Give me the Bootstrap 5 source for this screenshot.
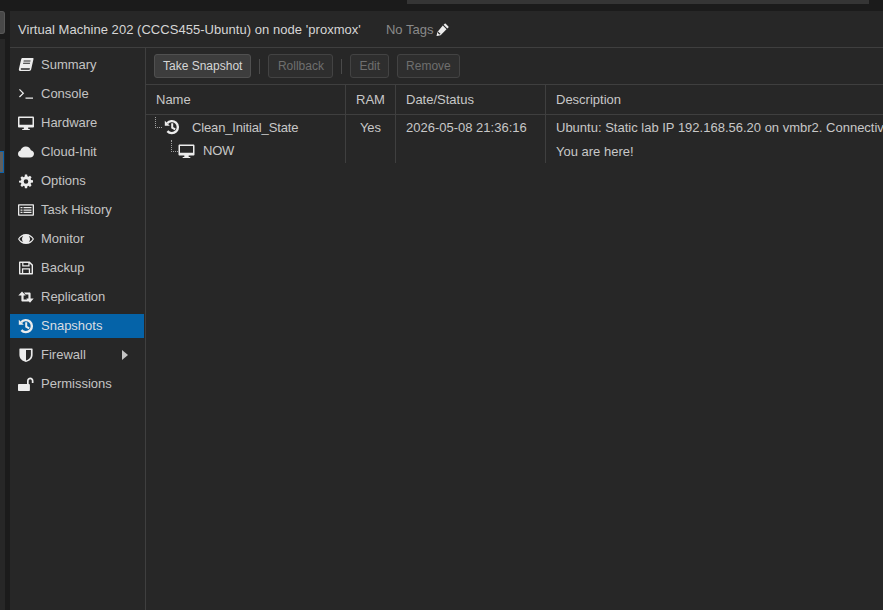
<!DOCTYPE html>
<html lang="en">
<head>
    <meta charset="UTF-8">
    <meta name="viewport" content="width=device-width, initial-scale=1.0">
    <title>Snapshots</title>
    <link href="https://cdn.jsdelivr.net/npm/bootstrap@5.3.0/dist/css/bootstrap.min.css" rel="stylesheet">
    <style>
        html, body {
            height: 100%;
            overflow: hidden;
        }
        body {
            background-color: #1b1b1b;
            color: #d0d0d0;
            font-family: "Liberation Sans", Arial, sans-serif;
            font-size: 13px;
        }
        .app-frame {
            height: 610px;
        }
        .left-rail {
            width: 10px;
            flex: none;
        }
        .rail-top {
            height: 23px;
            margin-top: 11px;
            width: 5px;
            background-color: #484848;
            border: 1px solid #585858;
            border-left: 0;
            border-radius: 0 3px 3px 0;
        }
        .rail-tree {
            margin-top: 5px;
            width: 5px;
            height: 571px;
            background-color: #272727;
            position: relative;
        }
        .rail-sel {
            position: absolute;
            top: 112px;
            left: 0;
            width: 4px;
            height: 22px;
            background-color: #5f5f5f;
            border: 1px solid #0b63ad;
            border-left: 0;
        }
        .main-wrap {
            min-width: 0;
        }
        .top-strip {
            height: 11px;
            flex: none;
        }
        .top-strip-field {
            margin-left: 397px;
            width: 462px;
            height: 4px;
            background-color: #353535;
        }
        .main-panel {
            background-color: #272727;
            min-height: 0;
        }
        .title-bar {
            height: 37px;
            flex: none;
            padding-left: 8px;
            border-bottom: 1px solid #3f3f3f;
            color: #d6d6d6;
            line-height: 38px;
            white-space: nowrap;
            letter-spacing: .04px;
        }
        .tag-label {
            margin-left: 25px;
            color: #8a8a8a;
        }
        .tag-edit {
            fill: #ececec;
            vertical-align: -2px;
            margin-left: -1px;
        }
        .body-area {
            min-height: 0;
        }
        .side-menu {
            width: 136px;
            flex: none;
            border-right: 1px solid #3f3f3f;
            padding-top: 5px;
        }
        .side-item {
            height: 24px;
            margin-bottom: 5px;
            display: flex;
            align-items: center;
            color: #c4c4c4;
            white-space: nowrap;
            position: relative;
        }
        .side-item.is-active {
            background-color: #0563a8;
            color: #d8dde2;
            margin-right: 1px;
        }
        .side-icon {
            width: 16px;
            height: 16px;
            margin-left: 8px;
            margin-right: 7px;
            flex: none;
            fill: #ececec;
            stroke: #ececec;
        }
        .side-arrow {
            position: absolute;
            left: 112px;
            top: 7px;
            width: 0;
            height: 0;
            border-left: 6px solid #c4c4c4;
            border-top: 5px solid transparent;
            border-bottom: 5px solid transparent;
        }
        .content-pane {
            min-width: 0;
        }
        .tool-bar {
            height: 37px;
            flex: none;
            padding-left: 8px;
            border-bottom: 1px solid #3f3f3f;
        }
        .tool-btn {
            height: 24px;
            padding: 0 8px;
            font-size: 12px;
            line-height: 22px;
            border: 1px solid #434343;
            border-radius: 3px;
            background-color: #2e2e2e;
            color: #6f6f6f;
            white-space: nowrap;
        }
        .tool-btn.is-on {
            background-color: #3d3d3d;
            border-color: #505050;
            color: #d6d6d6;
        }
        .tool-btn-roll {
            min-width: 65px;
        }
        .tool-sep {
            width: 1px;
            height: 15px;
            background-color: #4a4a4a;
            margin: 0 8px;
        }
        .grid-head, .grid-row {
            display: flex;
        }
        .grid-head {
            height: 30px;
            flex: none;
            border-bottom: 1px solid #3f3f3f;
            line-height: 29px;
            color: #c8c8c8;
        }
        .cell-name { width: 199px; flex: none; padding-left: 10px; }
        .cell-tree { padding-left: 0; display: flex; align-items: flex-start; }
        .cell-ram { width: 50px; flex: none; text-align: center; border-left: 1px solid #3f3f3f; }
        .cell-date { width: 150px; flex: none; padding-left: 10px; border-left: 1px solid #3f3f3f; white-space: nowrap; }
        .cell-desc { flex: 1 1 0; min-width: 0; padding-left: 10px; border-left: 1px solid #3f3f3f; white-space: nowrap; overflow: hidden; }
        .grid-row {
            height: 24px;
            line-height: 26px;
            color: #c8c8c8;
        }
        .tree-line {
            flex: none;
            border-left: 1px dotted #a0a0a0;
            border-bottom: 1px dotted #a0a0a0;
            width: 7px;
        }
        .tree-one { height: 11px; margin-left: 9px; margin-top: 2px; margin-right: 2px; }
        .tree-two { height: 12px; margin-left: 25px; margin-top: 1px; }
        .tree-icon { flex: none; fill: #ececec; stroke: #ececec; margin-top: 4px; }
        .snap-name { margin-left: 12px; letter-spacing: -.15px; }
        .now-name { margin-left: 8px; line-height: 24px; letter-spacing: -.2px; }
    </style>
</head>
<body>
<svg width="0" height="0" class="d-none">
    <symbol id="ic-history" viewBox="0 0 16 16">
        <path stroke="none" d="M.8 1.800L5.800 6.700H.8z"/>
        <path fill="none" stroke-width="2.400" d="M3.200 4.300A6 6 0 1 1 3.400 12.100"/>
        <path fill="none" stroke-width="2" d="M8.200 4.300V8.600L11.200 10.300"/>
    </symbol>
    <symbol id="ic-desktop" viewBox="0 0 16 16">
        <path stroke="none" fill-rule="evenodd" d="M1.200 1.500h13.600c.7 0 1.200.5 1.200 1.200v8.700c0 .7-.5 1.200-1.200 1.200H10.200v1.400h1.600v1.100H4.200v-1.100h1.600v-1.400H1.200c-.7 0-1.200-.5-1.200-1.200V2.700c0-.7.5-1.200 1.200-1.200zM1.500 3v6.800h13V3z"/>
    </symbol>
</svg>
<div class="app-frame d-flex">
    <div class="left-rail">
        <div class="rail-top"></div>
        <div class="rail-tree"><div class="rail-sel"></div></div>
    </div>
    <div class="main-wrap flex-grow-1 d-flex flex-column">
        <div class="top-strip"><div class="top-strip-field"></div></div>
        <div class="main-panel flex-grow-1 d-flex flex-column">
            <div class="title-bar">
                Virtual Machine 202 (CCCS455-Ubuntu) on node 'proxmox'<span class="tag-label">No Tags</span>
                <svg class="tag-edit" width="13" height="13" viewBox="0 0 13 13"><path d="M9.700.7l2.700 2.700c.3.3.3.7 0 1L11.300 5.500 7.600 1.800 8.700.7c.3-.3.7-.3 1 0zM6.800 2.600l3.700 3.700-5.900 5.900-4.100.9.900-4.100zM2 8.400l-.3 1.400 1.600 1.600 1.400-.3z"/></svg>
            </div>
            <div class="body-area flex-grow-1 d-flex">
                <div class="side-menu">
                    <div class="side-item"><svg class="side-icon" viewBox="0 0 16 16" stroke="none"><path stroke="none" fill-rule="evenodd" d="M4.500 1h10.300c.5 0 .8.400.7.900l-2.300 10.400c-.2.900-1 1.700-2 1.700H2.500C1.300 14 .6 13 .9 11.900L3.200 2.200C3.400 1.500 3.900 1 4.500 1zM5.700 3.600l-.2 1h6.900l.2-1zM5.200 5.800l-.2 1h6.900l.2-1zM2.900 11.200c-.4.900 0 1.600.7 1.600h7.300c.4 0 .7-.2.8-.6l.2-1z"/></svg>Summary</div>
                    <div class="side-item"><svg class="side-icon" viewBox="0 0 16 16"><path stroke="none" d="M1 3.800l.9-.9 4.300 4.300-4.300 4.300-.9-.9 3.400-3.400zM7.500 11.500h7.500v1.200H7.500z"/></svg>Console</div>
                    <div class="side-item"><svg class="side-icon"><use href="#ic-desktop"/></svg>Hardware</div>
                    <div class="side-item"><svg class="side-icon" viewBox="0 0 16 16"><path stroke="none" d="M4 13.500c-2.200 0-4-1.500-4-3.600 0-1.600 1-2.900 2.500-3.400C3 4.200 5.200 2.500 7.800 2.500c2.400 0 4.500 1.500 5.100 3.700 1.800.3 3.100 1.800 3.100 3.600 0 2.100-1.800 3.700-3.900 3.700z"/></svg>Cloud-Init</div>
                    <div class="side-item"><svg class="side-icon" viewBox="0 0 16 16"><path stroke="none" fill-rule="evenodd" d="M6.900 1.500h2.200l.3 1.800 1.100.5 1.500-1 1.600 1.500-1 1.500.5 1.100 1.900.3v2.200l-1.900.3-.5 1.100 1 1.500-1.600 1.600-1.500-1.100-1.100.5-.3 1.900H6.900l-.3-1.900-1.100-.5-1.500 1.100-1.600-1.600 1-1.500-.5-1.100-1.900-.3V7.700l1.900-.3.5-1.100-1-1.500 1.600-1.500 1.500 1 1.100-.5zM8 6.200a2.300 2.300 0 100 4.600 2.300 2.300 0 000-4.600z"/></svg>Options</div>
                    <div class="side-item"><svg class="side-icon" viewBox="0 0 16 16"><path stroke="none" fill-rule="evenodd" d="M1 2.200h14c.6 0 1 .4 1 1v9.600c0 .6-.4 1-1 1H1c-.6 0-1-.4-1-1V3.200c0-.6.4-1 1-1zM1.300 3.500v9h13.400v-9zM2.500 5h2v1.300h-2zM5.500 5h8v1.300h-8zM2.500 7.400h2v1.300h-2zM5.500 7.400h8v1.300h-8zM2.500 9.800h2v1.300h-2zM5.500 9.800h8v1.300h-8z"/></svg>Task History</div>
                    <div class="side-item"><svg class="side-icon" viewBox="0 0 16 16"><path stroke="none" fill-rule="evenodd" d="M8 3c3.500 0 6.500 2 8 5-1.500 3-4.500 5-8 5s-6.500-2-8-5c1.500-3 4.500-5 8-5zM5.300 4.900C3.600 5.400 2.200 6.500 1.300 8c.9 1.500 2.300 2.600 4 3.100A4.300 4.300 0 0 1 5.300 4.900zM10.700 4.900a4.300 4.300 0 0 1 0 6.200c1.700-.5 3.100-1.600 4-3.100-.9-1.500-2.300-2.600-4-3.100z"/><circle stroke="none" cx="8" cy="8" r="3"/></svg>Monitor</div>
                    <div class="side-item"><svg class="side-icon" viewBox="0 0 16 16"><path stroke="none" fill-rule="evenodd" d="M2 1.500h9.700L15 4.800v8.700c0 .6-.4 1-1 1H2c-.6 0-1-.4-1-1v-11c0-.6.400-1 1-1zM2.400 2.900v10.200h1.500V8.300h8.200v4.800h1.500V5.400l-2-2v3H4.200V2.900zM5.400 2.900v2.300h4.900V2.900zM5.200 9.500v3.600h5.600V9.500z"/></svg>Backup</div>
                    <div class="side-item"><svg class="side-icon" viewBox="0 0 16 16"><path stroke="none" d="M4 2.500L7.800 6.500H5.600v4.100H11l1.600 2H4.600c-.7 0-1.200-.5-1.200-1.200V6.500H.3zM12 13.700L8.200 9.500h2.200V5.400H7.600L6 3.400h5.400c.7 0 1.200.5 1.200 1.200v4.900h3.100z"/></svg>Replication</div>
                    <div class="side-item is-active"><svg class="side-icon"><use href="#ic-history"/></svg>Snapshots</div>
                    <div class="side-item"><svg class="side-icon" viewBox="0 0 16 16"><path stroke="none" fill-rule="evenodd" d="M2 1.500h12c.3 0 .6.300.6.600V8c0 3.800-3.200 6.200-6.600 7C4.600 14.200 1.400 11.800 1.400 8V2.100c0-.3.300-.6.600-.6zM8 3v10.400c2.500-.7 4.900-2.600 4.900-5.400V3z"/></svg>Firewall<span class="side-arrow"></span></div>
                    <div class="side-item"><svg class="side-icon" viewBox="0 0 16 16"><path stroke="none" d="M1 8h8V5c0-2 1.500-3.500 3.300-3.500S15.500 3 15.500 5v2h-1.700V5c0-1-.7-1.800-1.600-1.800S10.700 4 10.700 5v3h.3c.5 0 .9.400.9.900v5c0 .6-.4 1-.9 1H1c-.5 0-1-.4-1-1v-5c0-.5.500-.9 1-.9z"/></svg>Permissions</div>
                </div>
                <div class="content-pane flex-grow-1 d-flex flex-column">
                    <div class="tool-bar d-flex align-items-center">
                        <button type="button" class="tool-btn is-on">Take Snapshot</button>
                        <span class="tool-sep"></span>
                        <button type="button" class="tool-btn tool-btn-roll">Rollback</button>
                        <span class="tool-sep"></span>
                        <button type="button" class="tool-btn">Edit</button>
                        <button type="button" class="tool-btn ms-2">Remove</button>
                    </div>
                    <div class="grid-head">
                        <div class="cell-name">Name</div>
                        <div class="cell-ram">RAM</div>
                        <div class="cell-date">Date/Status</div>
                        <div class="cell-desc">Description</div>
                    </div>
                    <div class="grid-row">
                        <div class="cell-name cell-tree">
                            <span class="tree-line tree-one"></span>
                            <svg class="tree-icon" width="16" height="16"><use href="#ic-history"/></svg>
                            <span class="snap-name">Clean_Initial_State</span>
                        </div>
                        <div class="cell-ram">Yes</div>
                        <div class="cell-date">2026-05-08 21:36:16</div>
                        <div class="cell-desc">Ubuntu: Static lab IP 192.168.56.20 on vmbr2. Connectivity</div>
                    </div>
                    <div class="grid-row">
                        <div class="cell-name cell-tree">
                            <span class="tree-line tree-two"></span>
                            <svg class="tree-icon" width="17" height="16"><use href="#ic-desktop"/></svg>
                            <span class="now-name">NOW</span>
                        </div>
                        <div class="cell-ram"></div>
                        <div class="cell-date"></div>
                        <div class="cell-desc">You are here!</div>
                    </div>
                </div>
            </div>
        </div>
    </div>
</div>
<script src="https://cdn.jsdelivr.net/npm/bootstrap@5.3.0/dist/js/bootstrap.bundle.min.js"></script>
</body>
</html>
